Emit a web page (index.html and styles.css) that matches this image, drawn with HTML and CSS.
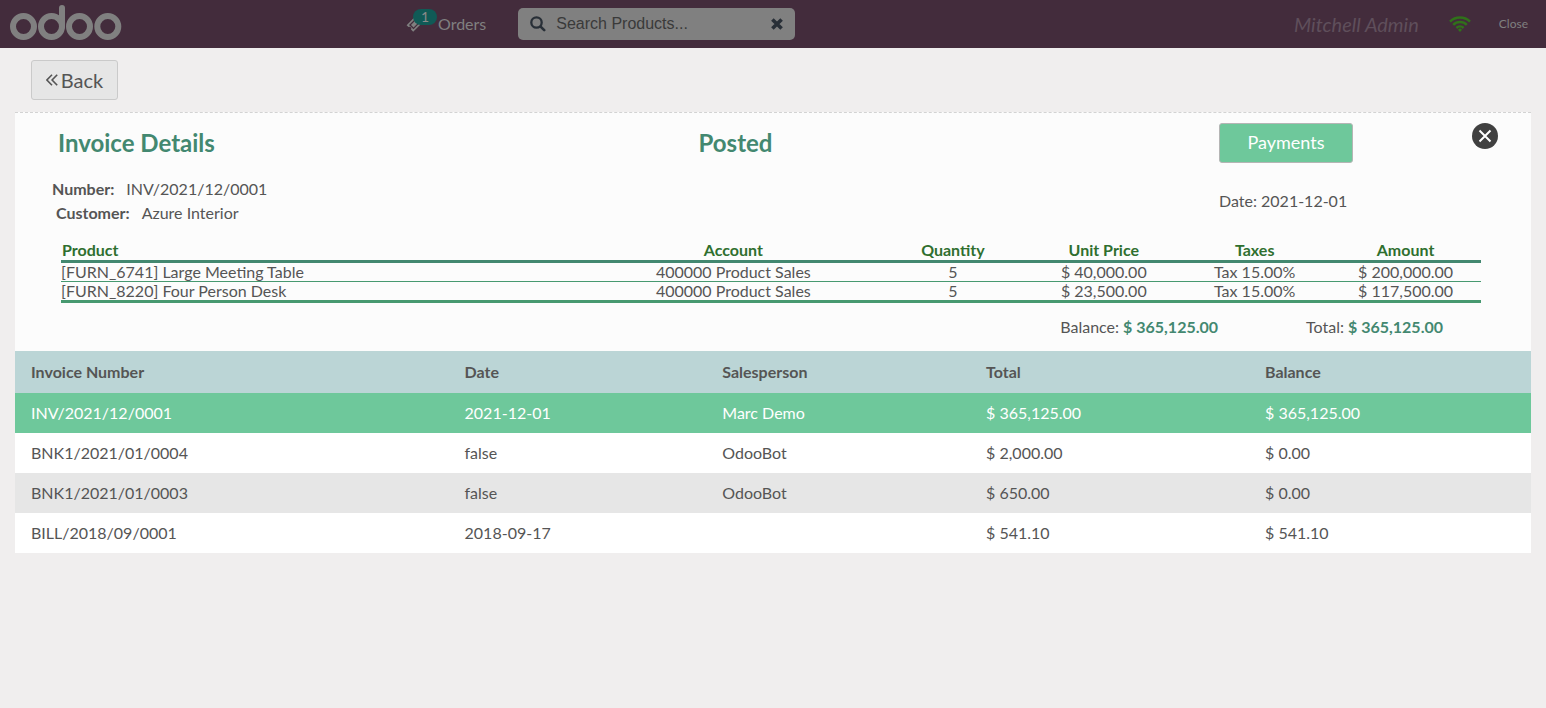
FILE: index.html
```html
<!DOCTYPE html>
<html lang="en">
<head>
<meta charset="utf-8">
<title>Odoo POS - Invoices</title>
<link rel="stylesheet" href="styles.css">
</head>
<body>
<header class="topbar">
  <div class="brand">
    <svg class="logo" width="112" height="36" viewBox="0 0 112 36" fill="none" stroke="#808080" stroke-width="6" stroke-linecap="round" role="img" aria-label="odoo">
      <circle cx="13.500" cy="21.500" r="10.500"/>
      <circle cx="41.500" cy="21.500" r="10.500"/>
      <path d="M52 3v18.500"/>
      <circle cx="69.500" cy="21.500" r="10.500"/>
      <circle cx="97.800" cy="21.500" r="10.500"/>
    </svg>
  </div>
  <button class="orders" type="button">
    <span class="ticket">
      <svg width="18" height="18" viewBox="0 0 18 18" fill="none" aria-hidden="true">
        <path fill="#808080" fill-rule="evenodd" d="M10.200 0.600 0.600 10.200l1.900 1.900a1.800 1.800 0 0 1 2.500 2.500l2.200 2.200 9.600-9.600-2.100-2.100a1.800 1.800 0 0 1-2.500-2.500zM9.600 3.400l4.600 4.200-6.700 6.700-4.500-4.300zM9.600 5.200 5 9.900l2.600 2.500 4.600-4.700z"/>
      </svg>
      <span class="badge">1</span>
    </span>
    <span>Orders</span>
  </button>
  <label class="search">
    <svg width="16" height="16" viewBox="0 0 16 16" fill="none" stroke="#282f37" stroke-linecap="round" aria-hidden="true">
      <circle cx="6.500" cy="6.500" r="5.200" stroke-width="2.300"/>
      <path d="M10.600 10.600l3.600 3.600" stroke-width="2.600"/>
    </svg>
    <input type="text" placeholder="Search Products..." aria-label="Search Products">
    <button class="clear" type="button" aria-label="Clear search">
      <svg width="12" height="12" viewBox="0 0 12 12" stroke="#282f37" stroke-width="3.600" aria-hidden="true"><path d="M1.400 1.400l9.200 9.200M10.600 1.400l-9.200 9.200"/></svg>
    </button>
  </label>
  <div class="session">
    <span class="user">Mitchell Admin</span>
    <svg width="22" height="16" viewBox="0 0 22 16" fill="none" stroke="#30711a" stroke-width="2.500" role="img" aria-label="Connected">
      <path d="M1 5.600a14.200 14.200 0 0 1 20 0M4.200 8.900a9.700 9.700 0 0 1 13.600 0M7.400 12a5.200 5.200 0 0 1 7.200 0"/>
      <path d="M11 12.300l2.100 1.500L11 16l-2.100-2.200z" fill="#30711a" stroke="none"/>
    </svg>
    <button class="close" type="button">Close</button>
  </div>
</header>
<main>
  <div class="toolbar">
    <button class="back" type="button">
      <svg width="12" height="12" viewBox="0 0 12 12" fill="none" stroke="#555" stroke-width="1.600" aria-hidden="true"><path d="M6 .8.900 6 6 11.200M11.200.8 6.100 6l5.100 5.200"/></svg>
      <span>Back</span>
    </button>
  </div>
  <section class="details">
    <div class="summary">
      <div class="identity">
        <h1>Invoice Details</h1>
        <dl>
          <div class="field"><dt>Number:</dt><dd>INV/2021/12/0001</dd></div>
          <div class="field customer"><dt>Customer:</dt><dd>Azure Interior</dd></div>
        </dl>
      </div>
      <h2>Posted</h2>
      <div class="actions">
        <button class="payments" type="button">Payments</button>
        <p>Date: 2021-12-01</p>
      </div>
      <button class="dismiss" type="button" aria-label="Close details">
        <svg width="26" height="26" viewBox="0 0 26 26" aria-hidden="true"><circle cx="13" cy="13" r="13" fill="#404040"/><path d="M7.500 7.500l11 11M18.500 7.500l-11 11" stroke="#fff" stroke-width="2"/></svg>
      </button>
    </div>
    <table class="lines">
      <thead><tr><th>Product</th><th>Account</th><th>Quantity</th><th>Unit Price</th><th>Taxes</th><th>Amount</th></tr></thead>
      <tbody>
        <tr><td>[FURN_6741] Large Meeting Table</td><td>400000 Product Sales</td><td>5</td><td>$ 40,000.00</td><td>Tax 15.00%</td><td>$ 200,000.00</td></tr>
        <tr><td>[FURN_8220] Four Person Desk</td><td>400000 Product Sales</td><td>5</td><td>$ 23,500.00</td><td>Tax 15.00%</td><td>$ 117,500.00</td></tr>
      </tbody>
    </table>
    <div class="totals">
      <p>Balance: <strong>$ 365,125.00</strong></p>
      <p>Total: <strong>$ 365,125.00</strong></p>
    </div>
  </section>
  <table class="invoices">
    <thead><tr><th>Invoice Number</th><th>Date</th><th>Salesperson</th><th>Total</th><th>Balance</th></tr></thead>
    <tbody>
      <tr class="selected"><td>INV/2021/12/0001</td><td>2021-12-01</td><td>Marc Demo</td><td>$ 365,125.00</td><td>$ 365,125.00</td></tr>
      <tr><td>BNK1/2021/01/0004</td><td>false</td><td>OdooBot</td><td>$ 2,000.00</td><td>$ 0.00</td></tr>
      <tr><td>BNK1/2021/01/0003</td><td>false</td><td>OdooBot</td><td>$ 650.00</td><td>$ 0.00</td></tr>
      <tr><td>BILL/2018/09/0001</td><td>2018-09-17</td><td></td><td>$ 541.10</td><td>$ 541.10</td></tr>
    </tbody>
  </table>
</main>
</body>
</html>
```
FILE: styles.css
```css
* { box-sizing: border-box; }

body {
  margin: 0;
  background: #f0eeee;
  color: #555;
  font: 16px/20px Lato, sans-serif;
}

button, input { font: inherit; color: inherit; }
button { padding: 0; border: 0; background: none; cursor: pointer; }
h1, h2, p, dl, dd { margin: 0; }
svg { display: block; flex: none; }

.topbar {
  display: flex;
  align-items: center;
  height: 48px;
  background: #432c3c;
  color: #808080;
}

.brand {
  flex: 0 1 406px;
  padding: 0 0 2px 10px;
}

.orders {
  display: flex;
  align-items: center;
  gap: 14px;
}

.ticket { position: relative; }

.badge {
  position: absolute;
  left: 7px;
  top: -6px;
  width: 24px;
  height: 16px;
  border-radius: 8px;
  background: #105a56;
  color: #8a8a8a;
  font-size: 14px;
  line-height: 15px;
}

.search {
  display: flex;
  align-items: center;
  gap: 10px;
  width: 277px;
  height: 32px;
  margin-left: 32px;
  padding: 0 12px;
  border-radius: 5px;
  background: #808080;
}

.search input {
  flex: 1;
  min-width: 0;
  padding: 0;
  border: 0;
  outline: 0;
  background: none;
  color: #3a3a3a;
  font: 16px/20px "Liberation Sans", sans-serif;
}

.search input::placeholder { color: #3a3a3a; opacity: 1; }

.session {
  display: flex;
  align-items: center;
  margin-left: auto;
  padding-right: 18px;
}

.user {
  margin-right: 30px;
  color: #5f4f5b;
  font-size: 20px;
  font-style: italic;
}

.close {
  margin-left: 28px;
  font-size: 12px;
}

main { padding: 0 15px; }

.toolbar { padding: 12px 16px; }

.back {
  display: flex;
  align-items: center;
  justify-content: center;
  gap: 3px;
  width: 87px;
  height: 40px;
  padding-bottom: 1px;
  border: 1px solid #cacaca;
  border-radius: 3px;
  background: #e6e6e6;
  font-size: 20px;
}

.details {
  padding: 0 50px 14px 46px;
  border-top: 1px dashed #d3d3d3;
  background: #fcfcfc;
}

.summary {
  display: grid;
  grid-template-columns: 42% 1fr 262px 26px;
  align-items: start;
  margin-right: -17px;
  padding-top: 10px;
}

h1, h2 {
  color: #438870;
  font-size: 24px;
  line-height: 40px;
}

.identity { margin-left: -9px; }
.identity h1 { padding-left: 6px; }
.identity dl { padding-top: 14px; }
.field { display: flex; gap: 12px; line-height: 24px; }
.customer { padding-left: 4px; }
dt { font-weight: 700; }

.summary h2 { padding-left: 34px; }

.payments {
  width: 134px;
  height: 40px;
  padding-bottom: 2px;
  border: 1px solid #b5b5b5;
  border-radius: 3px;
  background: #6ec89b;
  color: #fff;
  font-size: 18px;
}

.actions { margin-left: 9px; }
.actions p { padding-top: 28px; }

.dismiss { line-height: 0; }

.lines {
  width: 100%;
  margin-top: 14px;
  border-collapse: separate;
  border-spacing: 0;
  table-layout: fixed;
  line-height: 18px;
}

.lines th {
  padding: 2px 1px 1px;
  border-bottom: 3px solid #438870;
  color: #2f6f2f;
}

.lines th:first-child { width: 37.2%; }
.lines th:nth-child(2) { width: 20.3%; }

.lines td {
  padding: 0;
  border-bottom: 1px solid #479970;
  text-align: center;
}

.lines tr:last-child td { border-bottom-width: 3px; }
.lines th:first-child, .lines td:first-child { text-align: left; }

.totals {
  display: flex;
  justify-content: flex-end;
  gap: 88px;
  padding: 14px 38px 0 0;
}

.totals strong { color: #438870; }

.invoices {
  width: 100%;
  border-collapse: collapse;
  table-layout: fixed;
}

.invoices th, .invoices td {
  height: 40px;
  padding: 0 16px;
  text-align: left;
}

.invoices th { height: 42px; background: #bbd5d6; }
.invoices th:first-child { width: 28.6%; }
.invoices th:nth-child(2) { width: 17%; }
.invoices th:nth-child(3) { width: 17.4%; }
.invoices th:nth-child(4) { width: 18.4%; }
.invoices tbody tr { background: #fff; }
.invoices tbody tr:nth-child(odd) { background: #e6e6e6; }
.invoices tbody .selected:nth-child(odd) { background: #6ec89b; color: #fff; }
```
